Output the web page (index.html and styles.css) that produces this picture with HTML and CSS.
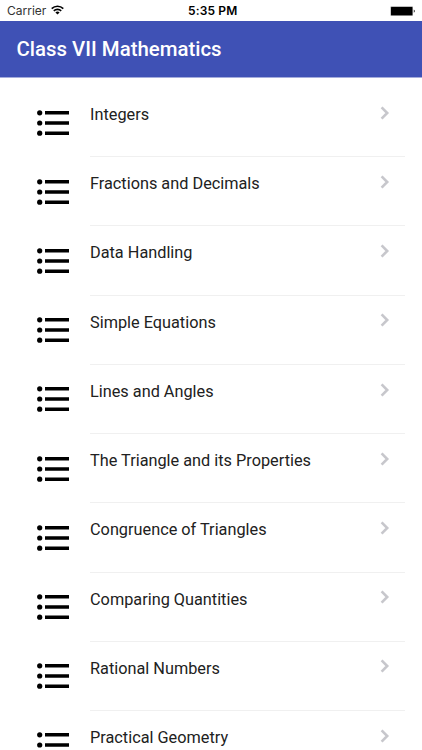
FILE: index.html
```html
<!DOCTYPE html>
<html lang="en">
<head>
<meta charset="utf-8">
<title>Class VII Mathematics</title>
<link rel="stylesheet" href="styles.css">
</head>
<body>
<svg class="defs" width="0" height="0">
<symbol id="list" viewBox="0 0 32 26"><g fill="#000"><circle cx="2.7" cy="2.8" r="2.6"/><circle cx="2.7" cy="13" r="2.6"/><circle cx="2.7" cy="23.2" r="2.6"/><path d="M8 1h24v3.5H8zM8 11.2h24v3.5H8zM8 21.4h24v3.5H8z"/></g></symbol>
<symbol id="chev" viewBox="0 0 10 14"><path d="M1.6 1.4L7.2 7l-5.6 5.6" fill="none" stroke="#c7c7cc" stroke-width="2.6"/></symbol>
</svg>
<div class="status">
<span class="carrier">Carrier</span>
<svg class="wifi" width="13" height="10" viewBox="0 0 13 10"><g fill="none" stroke="#000" stroke-width="1.6"><path d="M.7 3.6a8.3 8.3 0 0 1 11.6 0M2.8 5.9a5.2 5.2 0 0 1 7.4 0"/></g><path d="M6.5 9.6L4.4 7.5a3 3 0 0 1 4.2 0z"/></svg>
<span class="time">5:35 PM</span>
<svg class="battery" width="26" height="10" viewBox="0 0 26 10"><rect x=".4" y=".3" width="22.6" height="9.6" rx="1" fill="#aaa"/><rect x="1" y="1" width="21.4" height="8.2" rx=".5"/><path d="M23.8 3.5a1.8 1.8 0 0 1 0 3.2z"/></svg>
</div>
<header class="bar"><h1>Class VII Mathematics</h1></header>
<main class="list">
<div class="row"><svg class="icon"><use href="#list"/></svg><div class="body"><span>Integers</span><svg class="chev"><use href="#chev"/></svg></div></div>
<div class="row"><svg class="icon"><use href="#list"/></svg><div class="body"><span>Fractions and Decimals</span><svg class="chev"><use href="#chev"/></svg></div></div>
<div class="row"><svg class="icon"><use href="#list"/></svg><div class="body"><span>Data Handling</span><svg class="chev"><use href="#chev"/></svg></div></div>
<div class="row"><svg class="icon"><use href="#list"/></svg><div class="body"><span>Simple Equations</span><svg class="chev"><use href="#chev"/></svg></div></div>
<div class="row"><svg class="icon"><use href="#list"/></svg><div class="body"><span>Lines and Angles</span><svg class="chev"><use href="#chev"/></svg></div></div>
<div class="row"><svg class="icon"><use href="#list"/></svg><div class="body"><span>The Triangle and its Properties</span><svg class="chev"><use href="#chev"/></svg></div></div>
<div class="row"><svg class="icon"><use href="#list"/></svg><div class="body"><span>Congruence of Triangles</span><svg class="chev"><use href="#chev"/></svg></div></div>
<div class="row"><svg class="icon"><use href="#list"/></svg><div class="body"><span>Comparing Quantities</span><svg class="chev"><use href="#chev"/></svg></div></div>
<div class="row"><svg class="icon"><use href="#list"/></svg><div class="body"><span>Rational Numbers</span><svg class="chev"><use href="#chev"/></svg></div></div>
<div class="row"><svg class="icon"><use href="#list"/></svg><div class="body"><span>Practical Geometry</span><svg class="chev"><use href="#chev"/></svg></div></div>
</main>
</body>
</html>
```
FILE: styles.css
```css
* { box-sizing: border-box; }
body { margin: 0; height: 750px; overflow: hidden; background: #fff; font-family: Roboto, sans-serif; color: #212121; }
.defs { display: none; }
.status { display: grid; grid-template-columns: 44px 137px 1fr auto; align-items: center; height: 21px; padding: 0 6px 0 7px; color: #000; font: 12px/21px Inter, sans-serif; }
.carrier { color: #333; }
.wifi { margin-bottom: 1px; }
.time { font-weight: 600; letter-spacing: .15px; }
.bar { height: 57px; padding: 0 16.5px; background: #3f51b5; border-bottom: 1px solid #a4acdc; }
.bar h1 { margin: 0; color: #fff; font-size: 20.4px; font-weight: 500; line-height: 57px; }
.list { padding-top: 10px; }
.row { display: flex; height: 69.22px; }
.icon { width: 32px; height: 26px; margin: 21.5px 21px 0 37px; flex: none; }
.body { display: flex; justify-content: space-between; width: 315px; border-bottom: 1px solid #f0f0f0; padding: 17px 15px 0 0; }
.body span { font-size: 16.3px; line-height: 20px; white-space: nowrap; }
.chev { width: 10px; height: 14px; margin-top: .7px; flex: none; }
```
